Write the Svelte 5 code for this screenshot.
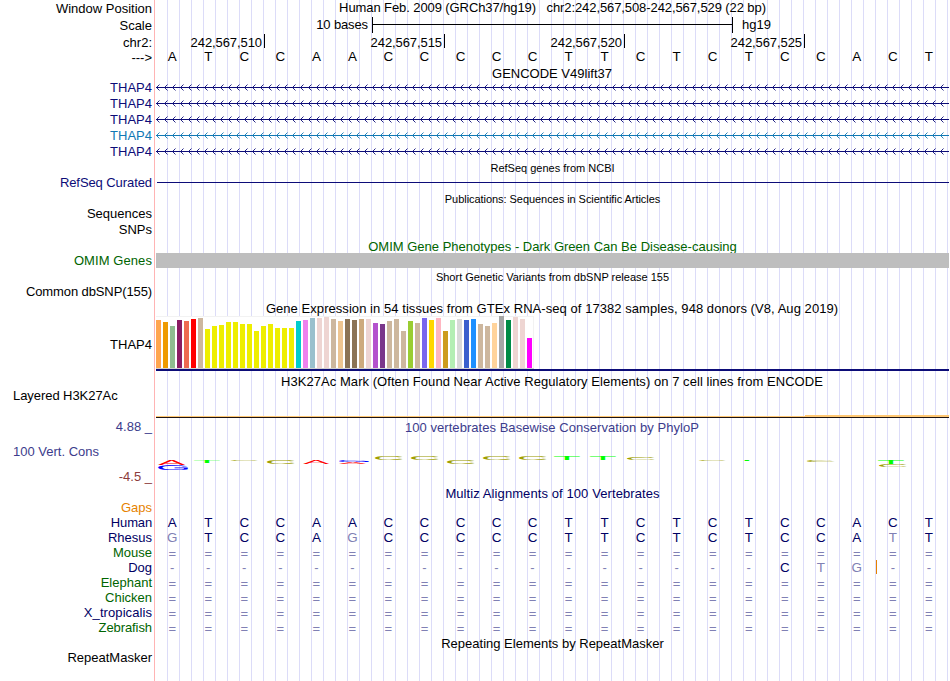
<script>
  const navy = '#0c0c78';
  const green = '#006400';
  const ink = '#000000';
  const deep = '#000064';
  const blue = '#3c3c8c';

  // Track labels: gap is the space above the label, ls its letter spacing
  const labels = [
    { t: 'Window Position', gap: 1, c: ink },
    { t: 'Scale', gap: 2, c: ink },
    { t: 'chr2:', gap: 2, c: ink },
    { t: '--->', gap: 0, c: ink },
    { t: 'THAP4', gap: 15, c: navy },
    { t: 'THAP4', gap: 1, c: navy },
    { t: 'THAP4', gap: 1, c: navy },
    { t: 'THAP4', gap: 1, c: '#1078b4' },
    { t: 'THAP4', gap: 1, c: navy },
    { t: 'RefSeq Curated', gap: 16, c: navy, ls: -0.08 },
    { t: 'Sequences', gap: 16, c: ink },
    { t: 'SNPs', gap: 1, c: ink },
    { t: 'OMIM Genes', gap: 16, c: green, ls: 0.08 },
    { t: 'Common dbSNP(155)', gap: 16, c: ink, ls: -0.11 },
    { t: 'THAP4', gap: 38, c: ink },
    { t: 'Layered H3K27Ac', gap: 36, c: ink, left: true, ls: -0.06 },
    { t: '4.88 _', gap: 16, c: blue },
    { t: '100 Vert. Cons', gap: 10, c: blue, left: true },
    { t: '-4.5 _', gap: 10, c: '#8c3c3c' },
    { t: 'Gaps', gap: 16, c: '#e68200' },
    { t: 'Human', gap: 0, c: deep, ls: -0.15 },
    { t: 'Rhesus', gap: 0, c: deep },
    { t: 'Mouse', gap: 0, c: green },
    { t: 'Dog', gap: 0, c: deep },
    { t: 'Elephant', gap: 0, c: green },
    { t: 'Chicken', gap: 0, c: green },
    { t: 'X_tropicalis', gap: 0, c: deep, ls: 0.08 },
    { t: 'Zebrafish', gap: 0, c: green, ls: -0.08 },
    { t: 'RepeatMasker', gap: 15, c: ink }
  ];

  const human = 'ATCCAACCCCCTTCTCTCCACT';
  const gap22 = '='.repeat(22);
  const alignments = [
    { name: 'human', seq: human },
    { name: 'rhesus', seq: 'GTCCAGCCCCCTTCTCTCCATT' },
    { name: 'mouse', seq: gap22 },
    { name: 'dog', seq: '-----------------CTG--' },
    { name: 'elephant', seq: gap22 },
    { name: 'chicken', seq: gap22 },
    { name: 'xenopus', seq: gap22 },
    { name: 'zebrafish', seq: gap22 }
  ];
  const isPale = (ch, i) => ch !== human[i];

  const positions = ['242,567,510', '242,567,515', '242,567,520', '242,567,525'];
  const genes = [navy, navy, navy, '#1078b4', navy];
  const arrows = Array.from({ length: 99 }, (_, i) => `M${i * 8 + 3.5} 4.5l-3 3l3 3`).join('');

  const yellow = '#eeee00';
  const tan = '#cdb79e';
  const rose = '#eed5d2';
  // [height, colour] for each tissue
  const tissues = [
    [48, '#ffa54f'], [46, '#ee9a00'], [42, '#8fbc8f'], [48, '#8b1c62'], [47, '#ee6a50'], [49, '#ff0000'], [50, tan],
    [39, yellow], [42, yellow], [43, yellow], [46, yellow], [46, yellow], [44, yellow], [44, yellow], [37, yellow],
    [42, yellow], [44, yellow], [40, yellow], [40, yellow], [40, yellow],
    [47, '#00cdcd'], [48, '#ee82ee'], [50, '#9ac0cd'], [50, rose], [51, rose], [49, tan], [47, '#eec591'],
    [49, '#8b7355'], [48, '#8b7355'], [49, '#cdaa7d'], [49, rose], [45, '#b452cd'], [44, '#7a378b'], [47, tan],
    [49, tan], [37, tan], [47, '#9acd32'], [45, tan], [50, '#7a67ee'], [48, '#ffd700'], [50, '#ffb6c1'],
    [37, '#cd9b1d'], [48, '#b4eeb4'], [49, '#d9d9d9'], [48, '#3a5fcd'], [49, '#1e90ff'], [44, tan], [42, tan],
    [45, '#ffd39b'], [52, '#a6a6a6'], [48, '#008b45'], [51, rose], [49, rose], [30, '#ff00ff']
  ];

  // Sequence logo: base, left, right, top, bottom within the logo strip
  const logo = [
    ['A', 2, 29, 10, 15], ['G', 2, 32, 15, 20],
    ['T', 38, 64, 10, 13], ['C', 75, 102.5, 10, 11],
    ['C', 111, 139, 10, 14], ['A', 147, 173, 10, 14],
    ['G', 183, 213, 10, 12], ['A', 183, 210, 12, 14],
    ['C', 219, 247, 6, 10], ['C', 255, 283, 6, 10],
    ['C', 291, 319, 10, 14], ['C', 327, 355, 6, 10],
    ['C', 363, 391, 6, 10], ['T', 398, 424, 6, 10],
    ['T', 434, 460, 6, 10], ['C', 471, 499, 7, 10],
    ['C', 543, 570, 10, 11], ['T', 578, 604, 10, 11],
    ['C', 651, 679, 10, 12], ['T', 722, 748, 10, 14],
    ['C', 723, 751, 14, 17]
  ];
  const metrics = {
    A: { l: 0.3, w: 66, up: 68.8, down: 0, c: '#ff0000' },
    C: { l: 5, w: 64, up: 70, down: 1.2, c: '#a0a000' },
    G: { l: 5, w: 66, up: 70, down: 1.2, c: '#0000ff' },
    T: { l: 2, w: 57, up: 68.8, down: 0, c: '#00ff00' }
  };
  function place([base, x0, x1, y0, y1]) {
    const m = metrics[base];
    const sx = (x1 - x0) / m.w;
    const sy = (y1 - y0) / (m.up + m.down);
    return `matrix(${sx} 0 0 ${sy} ${x0 - m.l * sx} ${y1 - m.down * sy})`;
  }
</script>

<main class="browser">
  <div class="labels">
    {#each labels as l}
      <div class="label" class:left={l.left} style="margin-top: {l.gap}px; color: {l.c}; letter-spacing: {l.ls ?? 0}px">{l.t}</div>
    {/each}
  </div>

  <div class="tracks">
    <div class="title window">Human Feb. 2009 (GRCh37/hg19)&nbsp;&nbsp; chr2:242,567,508-242,567,529 (22 bp)</div>

    <div class="scale">
      <span class="from">10 bases</span>
      <span class="rule"></span>
      <span>hg19</span>
    </div>

    <div class="positions">
      {#each positions as p}
        <span class="position">{p}</span>
      {/each}
    </div>

    <div class="bases ruler">
      {#each human as b}<span>{b}</span>{/each}
    </div>

    <div class="title gencode">GENCODE V49lift37</div>
    {#each genes as color}
      <svg class="gene" width="793" height="16" fill="none" stroke={color}>
        <path d="M0 7.5H793" shape-rendering="crispEdges" />
        <path d={arrows} stroke-width="0.9" />
      </svg>
    {/each}

    <div class="title small refseq">RefSeq genes from NCBI</div>
    <div class="refseq-line"></div>
    <div class="title small publications">Publications: Sequences in Scientific Articles</div>
    <div class="title omim">OMIM Gene Phenotypes - Dark Green Can Be Disease-causing</div>
    <div class="omim-bar"></div>
    <div class="title small snp">Short Genetic Variants from dbSNP release 155</div>

    <div class="title gtex">Gene Expression in 54 tissues from GTEx RNA-seq of 17382 samples, 948 donors (V8, Aug 2019)</div>
    <div class="expression">
      <div class="bars">
        {#each tissues as [h, color]}
          <i style="height: {h}px; background: {color}"></i>
        {/each}
      </div>
    </div>

    <div class="title h3k">H3K27Ac Mark (Often Found Near Active Regulatory Elements) on 7 cell lines from ENCODE</div>
    <svg class="signal" width="793" height="3" shape-rendering="crispEdges">
      <path d="M0 1H649V0H793V2H0z" fill="#ffc873" />
      <path d="M0 2H793V3H0z" fill="#1e1414" />
    </svg>

    <div class="title phylop">100 vertebrates Basewise Conservation by PhyloP</div>
    <svg class="logo" width="793" height="25">
      {#each logo as g}
        <text transform={place(g)} fill={metrics[g[0]].c}>{g[0]}</text>
      {/each}
    </svg>

    <div class="title multiz">Multiz Alignments of 100 Vertebrates</div>
    <div class="alignments">
      {#each alignments as row}
        <div class="bases {row.name}">
          {#each row.seq as b, i}<span class:pale={isPale(b, i)} class:unaligned={b === '='} class:gap={b === '-'} class:insert={row.name === 'dog' && i === 19}>{b}</span>{/each}
        </div>
      {/each}
    </div>

    <div class="title repeat">Repeating Elements by RepeatMasker</div>
  </div>
</main>

<style>
  :global(body) {
    background: #fff;
  }

  .browser {
    display: flex;
    width: 949px;
    height: 681px;
    overflow: hidden;
    font: 13px/15px 'Liberation Sans', Arial, sans-serif;
    white-space: nowrap;
    color: #000;
  }

  .labels {
    display: flex;
    flex-direction: column;
    box-sizing: border-box;
    width: 155px;
    padding-right: 2px;
    border-right: 1px solid #ffb4b4;
    text-align: right;
  }

  .label {
    height: 15px;
    flex: none;
  }

  .label.left {
    padding-left: 13px;
    text-align: left;
  }

  .tracks {
    display: flex;
    flex-direction: column;
    width: 793px;
    padding-left: 1px;
    background: repeating-linear-gradient(to right, #dcdcf8 0 1px, transparent 1px 12px) 12px 0 no-repeat;
  }

  .tracks > :global(*) {
    flex: none;
  }

  .title {
    height: 15px;
    text-align: center;
  }

  .small {
    font-size: 11px;
  }

  .window {
    letter-spacing: -0.09px;
  }

  .scale {
    display: flex;
    height: 16px;
    margin-top: 2px;
  }

  .scale .from {
    width: 212px;
    margin-right: 4px;
    letter-spacing: -0.12px;
    text-align: right;
  }

  .rule {
    box-sizing: border-box;
    width: 361px;
    margin-right: 9px;
    border: solid #000;
    border-width: 0 1px;
    background: linear-gradient(#000, #000) 0 7px / 100% 1px no-repeat;
  }

  .positions {
    display: flex;
    height: 15px;
    margin-top: 1px;
  }

  .position {
    box-sizing: border-box;
    width: 180px;
    height: 14px;
    padding: 1px 2px 0 0;
    border-right: 1px solid #000;
    letter-spacing: -0.08px;
    text-align: right;
  }

  .position:first-child {
    width: 109px;
  }

  .bases {
    display: grid;
    grid-template-columns: repeat(22, 36.045px);
    height: 15px;
    margin-left: -1.8px;
    font-size: 13.4px;
    text-align: center;
  }

  .gencode {
    height: 14px;
    margin-top: 2px;
    text-indent: -1px;
  }

  .gene {
    display: block;
  }

  .refseq {
    margin-top: 1px;
  }

  .refseq-line {
    height: 1px;
    margin: 6px 0 9px 1px;
    background: #0c0c78;
  }

  .publications {
    letter-spacing: -0.05px;
  }

  .omim {
    height: 14px;
    margin-top: 32px;
    color: #006400;
  }

  .omim-bar {
    height: 15px;
    background: #bebebe;
  }

  .snp {
    margin-top: 2px;
  }

  .gtex {
    margin-top: 16px;
    letter-spacing: 0.055px;
    text-indent: -1px;
  }

  .expression {
    height: 53px;
    border-bottom: 2px solid #0c0c78;
  }

  .bars {
    display: flex;
    align-items: flex-end;
    gap: 2px;
    box-sizing: border-box;
    width: 378px;
    height: 53px;
    border-bottom: 1px solid #d0d0d0;
    background: #fff;
    box-shadow: inset -1px 1px #f2f2f2;
  }

  .bars i {
    width: 5px;
  }

  .h3k {
    margin-top: 3px;
    letter-spacing: 0.05px;
    text-indent: -1px;
  }

  .signal {
    display: block;
    margin-top: 26px;
  }

  .phylop {
    margin-top: 2px;
    letter-spacing: 0.04px;
    text-indent: -1px;
    color: #3c3c8c;
  }

  .logo {
    display: block;
    margin-top: 15px;
    font-size: 100px;
    text-rendering: geometricPrecision;
  }

  .multiz {
    margin-top: 11px;
    letter-spacing: 0.09px;
    color: #000064;
  }

  .alignments {
    margin-top: 14px;
    color: #000064;
  }

  .pale {
    color: #8080b4;
  }

  .unaligned {
    padding-top: 1px;
    font-size: 13px;
  }

  .gap {
    font-size: 13px;
  }

  .insert {
    margin-right: -2px;
    padding-right: 2px;
    background: linear-gradient(#e68200, #e68200) 100% 0 / 1px 14px no-repeat;
  }

  .repeat {
    margin-top: 1px;
  }
</style>
